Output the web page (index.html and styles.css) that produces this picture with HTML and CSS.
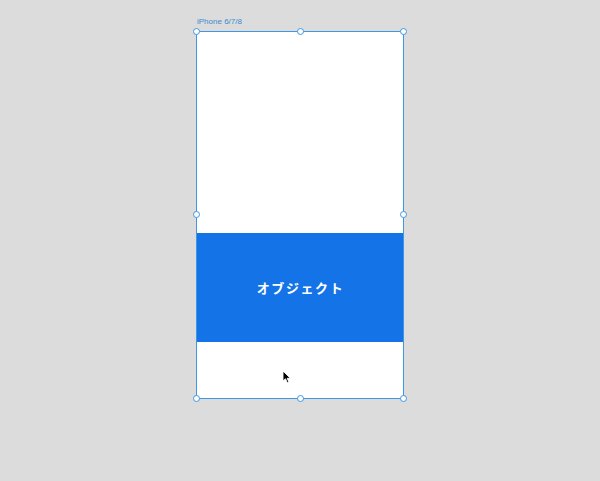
FILE: index.html
```html
<!DOCTYPE html>
<html lang="ja">
<head>
<meta charset="utf-8">
<link rel="stylesheet" href="styles.css">
</head>
<body>
<div class="canvas">
  <div class="label">iPhone 6/7/8</div>
  <div class="artboard">
    <div class="top-space"></div>
    <div class="object">オブジェクト</div>
    <div class="bottom-space"></div>
    <span class="handle h-tl"></span>
    <span class="handle h-tm"></span>
    <span class="handle h-tr"></span>
    <span class="handle h-ml"></span>
    <span class="handle h-mr"></span>
    <span class="handle h-bl"></span>
    <span class="handle h-bm"></span>
    <span class="handle h-br"></span>
    <svg class="cursor" width="10" height="14" viewBox="0 0 10 14">
      <path d="M1 1 L1 11 L3.5 8.8 L5.3 12.8 L6.9 12.1 L5.2 8.3 L8.4 8.3 Z" fill="#000" stroke="#fff" stroke-width="0.9" stroke-linejoin="round"/>
    </svg>
  </div>
</div>
</body>
</html>
```
FILE: styles.css
```css
html, body {
  margin: 0;
  padding: 0;
  background: #dcdcdc;
  width: 600px;
  height: 481px;
  overflow: hidden;
}
.canvas {
  margin-left: 196px;
  padding-top: 17px;
  width: 208px;
}
.label {
  font-family: "Liberation Sans", Arial, sans-serif;
  font-size: 8px;
  line-height: 10px;
  color: #3d8ad6;
  padding-left: 1px;
  height: 14px;
}
.artboard {
  position: relative;
  box-sizing: border-box;
  width: 208px;
  height: 368px;
  border: 1px solid #3f97e3;
  background: #ffffff;
  display: flex;
  flex-direction: column;
}
.top-space { height: 201px; }
.object {
  height: 109px;
  background: #1473e6;
  color: #ffffff;
  font-family: "Noto Sans CJK JP", "Noto Sans", sans-serif;
  font-weight: 700;
  font-size: 13px;
  letter-spacing: 1.6px;
  display: flex;
  align-items: center;
  justify-content: center;
  padding-left: 1px;
}
.bottom-space { flex: 1; }
.handle {
  position: absolute;
  width: 5px;
  height: 5px;
  border: 1px solid #3f97e3;
  border-radius: 50%;
  background: #ffffff;
}
.h-tl { left: -4px; top: -4px; }
.h-tm { left: 100px; top: -4px; }
.h-tr { right: -4px; top: -4px; }
.h-ml { left: -4px; top: 179px; }
.h-mr { right: -4px; top: 179px; }
.h-bl { left: -4px; bottom: -4px; }
.h-bm { left: 100px; bottom: -4px; }
.h-br { right: -4px; bottom: -4px; }
.cursor {
  position: absolute;
  left: 85px;
  top: 338px;
}
```
